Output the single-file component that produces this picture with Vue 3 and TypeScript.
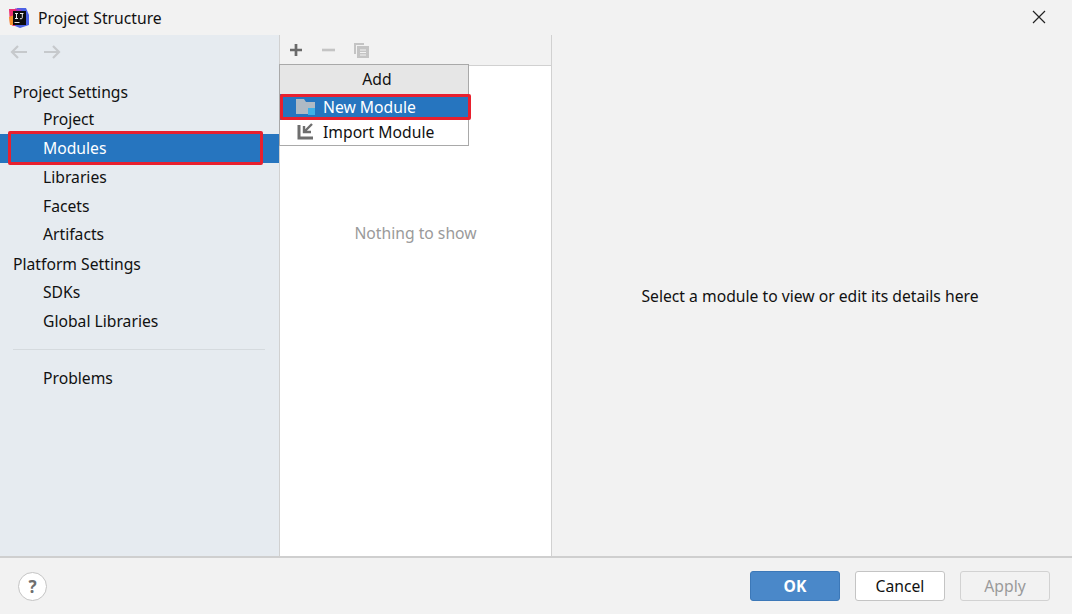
<script setup lang="ts">
interface NavItem { label: string; kind: 'head' | 'item'; active?: boolean }
const navTop: NavItem[] = [
  { label: 'Project Settings', kind: 'head' },
  { label: 'Project', kind: 'item' },
  { label: 'Modules', kind: 'item', active: true },
  { label: 'Libraries', kind: 'item' },
  { label: 'Facets', kind: 'item' },
  { label: 'Artifacts', kind: 'item' },
  { label: 'Platform Settings', kind: 'head' },
  { label: 'SDKs', kind: 'item' },
  { label: 'Global Libraries', kind: 'item' },
]
</script>

<template>
  <div class="dialog">
    <header class="title">
      <svg class="logo" width="20" height="20" viewBox="0 0 20 20">
        <path d="M0 1h9l5 3-7 14-3 0-3-2z" fill="#ee2f72" />
        <path d="M0 9l5-2 1 10-5 0z" fill="#f5902c" />
        <path d="M8 0l9 0 3 7v10l-9 3-5-2z" fill="#4b62e4" />
        <path d="M6 0l7 2-4 3z" fill="#a33bc9" />
        <rect x="4" y="3" width="13" height="14" fill="#0b0b0d" />
        <rect x="5.5" y="14" width="5" height="1" fill="#e8e8e8" />
        <path d="M6 5.5h3M7.5 5.5v5M6 10.5h3M11 5.5h3.5M13.3 5.5v4.2q0 1-1 1h-1.4" fill="none" stroke="#f0f0f0" stroke-width="1" />
      </svg>
      <span class="title-text">Project Structure</span>
      <svg class="close" width="14" height="14" viewBox="0 0 14 14">
        <path d="M1 1l12 12M13 1 1 13" stroke="#222" stroke-width="1.2" fill="none" />
      </svg>
    </header>

    <div class="body">
      <aside class="side">
        <div class="arrows">
          <svg width="18" height="14" viewBox="0 0 18 14">
            <path d="M17 7H2M8 1 2 7l6 6" fill="none" stroke="#c6c9cc" stroke-width="2.2" />
          </svg>
          <svg width="18" height="14" viewBox="0 0 18 14">
            <path d="M1 7h15M10 1l6 6-6 6" fill="none" stroke="#c6c9cc" stroke-width="2.2" />
          </svg>
        </div>
        <nav class="nav">
          <div
            v-for="n in navTop"
            :key="n.label"
            :class="['row', n.kind, { active: n.active }]"
          >{{ n.label }}</div>
        </nav>
        <div class="divider"></div>
        <div class="row item">Problems</div>
        <div class="mark mark-side"></div>
      </aside>

      <section class="mid">
        <div class="tools">
          <svg width="14" height="14" viewBox="0 0 14 14">
            <path d="M7 1v12M1 7h12" stroke="#6a6a6a" stroke-width="2.7" fill="none" />
          </svg>
          <svg width="14" height="14" viewBox="0 0 14 14">
            <path d="M1 7h13" stroke="#c4c4c4" stroke-width="2.6" fill="none" />
          </svg>
          <svg width="17" height="17" viewBox="0 0 17 17">
            <path d="M1 12V1h10v2H3v9z" fill="#c4c4c4" />
            <path d="M4 4h12v12H4z" fill="#c4c4c4" />
            <path d="M7 8h6M7 10.5h6M7 13h6" stroke="#f2f2f2" stroke-width="1.2" fill="none" />
          </svg>
        </div>
        <div class="empty">Nothing to show</div>

        <div class="popup">
          <div class="popup-head">Add</div>
          <div class="popup-row on">
            <svg width="20" height="18" viewBox="0 0 20 18">
              <path d="M0 1h8l2 3h9v12H0z" fill="#afbac4" />
              <rect x="12" y="10" width="7" height="7" fill="#3fb0e6" />
            </svg>
            <span>New Module</span>
          </div>
          <div class="popup-row import">
            <svg width="20" height="18" viewBox="0 0 20 18">
              <path d="M3 2v13h14" fill="none" stroke="#6e6e6e" stroke-width="3" />
              <path d="M16 1 8 9M8 3v6h7" fill="none" stroke="#6e6e6e" stroke-width="2.4" />
            </svg>
            <span>Import Module</span>
          </div>
          <div class="mark mark-pop"></div>
        </div>
      </section>

      <main class="detail">Select a module to view or edit its details here</main>
    </div>

    <footer class="foot">
      <button class="help" type="button">?</button>
      <div class="actions">
        <button class="btn primary" type="button">OK</button>
        <button class="btn" type="button">Cancel</button>
        <button class="btn off" type="button">Apply</button>
      </div>
    </footer>
  </div>
</template>

<style>
html, body { margin: 0; background: #f2f2f2; }
</style>

<style scoped>
.dialog {
  width: 1072px;
  height: 614px;
  display: flex;
  flex-direction: column;
  background: #f2f2f2;
  font-family: "Noto Sans", "Open Sans", sans-serif;
  font-size: 15.7px;
  color: #111;
  overflow: hidden;
}
.title {
  height: 35px;
  flex: none;
  display: flex;
  align-items: center;
  padding: 0 26px 0 9px;
  box-sizing: border-box;
}
.logo { margin-top: 1px; }
.title-text { margin-left: 9px; }
.close { margin-left: auto; margin-top: -1px; }

.body { flex: 1; display: flex; min-height: 0; border-bottom: 2px solid #cfcfcf; }

.side {
  position: relative;
  width: 279px;
  flex: none;
  background: #e6ebf0;
  border-right: 1px solid #d1d1d1;
}
.arrows { display: flex; gap: 15px; padding: 10px 0 0 10px; height: 33px; box-sizing: border-box; }
.nav { padding-top: 8.5px; }
.row { height: 28.8px; line-height: 28.8px; white-space: nowrap; }
.head { padding-left: 13px; line-height: 31px; }
.item { padding-left: 43px; }
.active { background: #2675bf; color: #fff; }
.divider { height: 1px; background: #d5dade; margin: 13.5px 14px 14px 13px; }
.mark { position: absolute; border: 3px solid #e8202e; border-radius: 2px; box-sizing: border-box; pointer-events: none; }
.mark-side { left: 8px; top: 96px; width: 255px; height: 34px; }

.mid {
  position: relative;
  width: 271px;
  flex: none;
  background: #fff;
  border-right: 1px solid #d1d1d1;
}
.tools {
  height: 31px;
  box-sizing: border-box;
  background: #f2f2f2;
  border-bottom: 1px solid #d1d1d1;
  display: flex;
  align-items: center;
  gap: 18px;
  padding: 0 0 0 9px;
}
.empty { text-align: center; color: #9a9a9a; margin-top: 155px; line-height: 24px; }

.popup {
  position: absolute;
  left: -1px;
  top: 29px;
  width: 190px;
  height: 82px;
  box-sizing: border-box;
  background: #fff;
  border: 1px solid #a9a9a9;
}
.popup-head {
  height: 29px;
  line-height: 28px;
  text-align: center;
  background: #e6e6e6;
  box-sizing: border-box;
  padding-left: 6px;
}
.popup-row {
  height: 26px;
  display: flex;
  align-items: center;
  gap: 7px;
  padding-left: 16px;
  white-space: nowrap;
}
.import { height: 24px; }
.popup-row.on { background: #2675bf; color: #fff; }
.mark-pop { left: 0; top: 29px; width: 191px; height: 26px; }

.detail {
  flex: 1;
  display: flex;
  align-items: center;
  justify-content: center;
  padding-right: 4px;
}

.foot {
  height: 56px;
  flex: none;
  display: flex;
  align-items: center;
  justify-content: space-between;
  padding: 0 22px 0 18px;
  box-sizing: border-box;
}
.help {
  width: 29px;
  height: 29px;
  border-radius: 50%;
  border: 1px solid #c4c4c4;
  background: #fff;
  color: #6e6e6e;
  font: 700 17px "Noto Sans", sans-serif;
  padding: 0;
}
.actions { display: flex; gap: 15px; }
.btn {
  width: 90px;
  height: 30px;
  box-sizing: border-box;
  border: 1px solid #c4c4c4;
  border-radius: 3px;
  background: #fff;
  color: #111;
  font: 15.7px "Noto Sans", sans-serif;
  padding: 0;
}
.primary { background: #4a88c9; border-color: #3c78b8; color: #fff; font-weight: 700; }
.off { background: #f2f2f2; border-color: #d2d2d2; color: #9a9a9a; }
</style>
